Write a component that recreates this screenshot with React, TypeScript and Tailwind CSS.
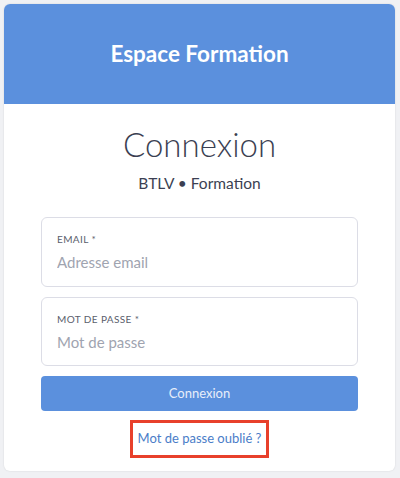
export default function App() {
  return (
    <div className="min-h-[478px] bg-[#f0f1f4] p-1 font-['Lato',sans-serif]">
      <div className="h-[467px] w-[391px] overflow-hidden rounded-md bg-white shadow-[0_0_2px_rgba(0,0,0,0.12)]">
        <div className="flex h-[100px] items-center justify-center bg-[#5b90dd]">
          <h1 className="text-[22.5px] font-bold text-white">Espace Formation</h1>
        </div>
        <div className="flex flex-col items-center px-[37px]">
          <h2 className="mt-[20px] text-[33px] leading-[40px] font-light text-[#3b3f52]">Connexion</h2>
          <p className="mt-[10px] text-[15.5px] leading-[18px] font-normal text-[#3b3f52]">BTLV • Formation</p>
          <div className="mt-[25px] flex h-[70px] w-full flex-col justify-center rounded-md border border-[#dcdde6] px-[15px]">
            <label className="text-[10px] leading-[12px] tracking-[0.04em] text-[#5a5e6c]">EMAIL *</label>
            <input
              placeholder="Adresse email"
              className="mt-[8px] text-[15px] leading-[18px] text-[#3b3f52] outline-none placeholder:text-[#a0a4b0]"
            />
          </div>
          <div className="mt-[10px] flex h-[69px] w-full flex-col justify-center rounded-md border border-[#dcdde6] px-[15px]">
            <label className="text-[10px] leading-[12px] tracking-[0.04em] text-[#5a5e6c]">MOT DE PASSE *</label>
            <input
              type="password"
              placeholder="Mot de passe"
              className="mt-[8px] text-[15px] leading-[18px] text-[#3b3f52] outline-none placeholder:text-[#a0a4b0]"
            />
          </div>
          <button className="mt-[10px] h-[35px] w-full rounded-[4px] bg-[#5b90dd] text-[13px] text-[#e8eefa]">Connexion</button>
          <div className="mt-[9px] flex h-[38px] w-[139px] items-center justify-center border-[3px] border-[#e8402b]">
            <a href="#" className="text-[13px] text-[#4a7dc8]">Mot de passe oublié ?</a>
          </div>
        </div>
      </div>
    </div>
  );
}
